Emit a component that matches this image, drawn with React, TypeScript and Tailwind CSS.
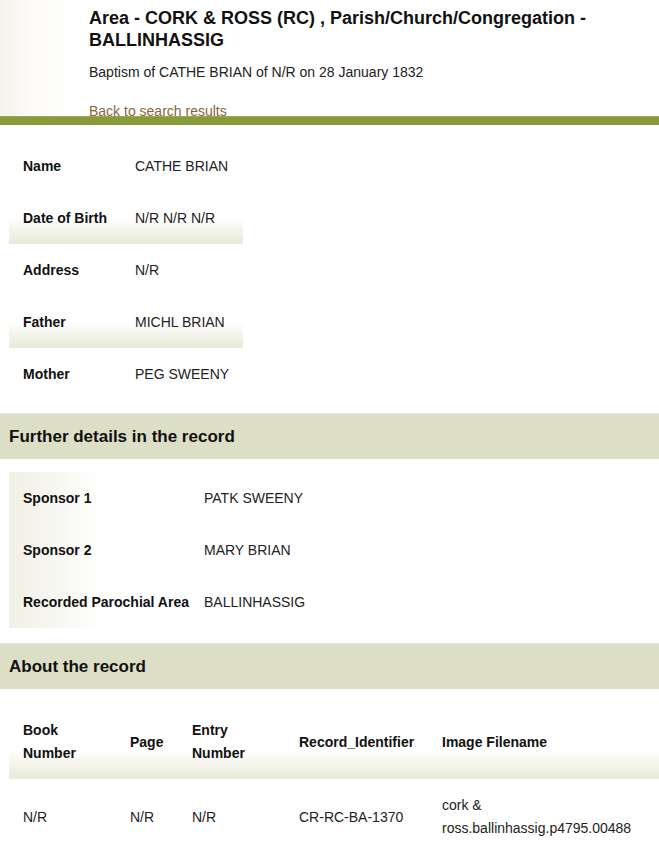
import React from "react";

const people = [
  { label: "Name", value: "CATHE BRIAN", shade: false },
  { label: "Date of Birth", value: "N/R N/R N/R", shade: true },
  { label: "Address", value: "N/R", shade: false },
  { label: "Father", value: "MICHL BRIAN", shade: true },
  { label: "Mother", value: "PEG SWEENY", shade: false },
];

const further = [
  { label: "Sponsor 1", value: "PATK SWEENY" },
  { label: "Sponsor 2", value: "MARY BRIAN" },
  { label: "Recorded Parochial Area", value: "BALLINHASSIG" },
];

const SectionBand = ({ title }: { title: string }) => (
  <div className="h-[46px] bg-[#dcdfc5] border-t border-[#e6e8d6] flex items-center pl-[9px]">
    <h2 className="text-[17px] font-bold text-[#111]">{title}</h2>
  </div>
);

const App = () => {
  return (
    <div className="w-[659px] min-h-[847px] bg-white text-[#222] font-['Liberation_Sans',Arial,sans-serif]">
      {/* header */}
      <div className="flex h-[116px] bg-gradient-to-r from-[#f5f2ec] via-[#fcfbf8] via-[5%] to-white to-[11%]">
        <div className="w-[89px] shrink-0" />
        <div className="pt-[7px]">
          <h1 className="text-[18px] font-bold leading-[22px] text-[#111]">
            Area - CORK &amp; ROSS (RC) , Parish/Church/Congregation - BALLINHASSIG
          </h1>
          <p className="mt-[12px] text-[14px] leading-[18px]">
            Baptism of CATHE BRIAN of N/R on 28 January 1832
          </p>
          <a className="block mt-[21px] text-[14px] leading-[18px] text-[#86673b]">
            Back to search results
          </a>
        </div>
      </div>
      <div className="h-[9px] bg-[#899a3b] border-t border-[#9aa951]" />

      {/* main person table */}
      <div className="mt-[15px] ml-[9px] w-[234px]">
        {people.map((r) => (
          <div
            key={r.label}
            className={`flex items-center h-[52px] text-[14px] ${
              r.shade ? "bg-gradient-to-b from-white from-50% to-[#e9e9d9]" : ""
            }`}
          >
            <div className="w-[126px] shrink-0 pl-[14px] font-bold text-[#111]">{r.label}</div>
            <div>{r.value}</div>
          </div>
        ))}
      </div>

      <div className="mt-[13px]">
        <SectionBand title="Further details in the record" />
      </div>

      <div className="mt-[13px] ml-[9px] w-[320px] bg-gradient-to-r from-[#f0f0e5] to-white to-[30%]">
        {further.map((r) => (
          <div key={r.label} className="flex items-center h-[52px] text-[14px]">
            <div className="w-[195px] shrink-0 pl-[14px] font-bold text-[#111]">{r.label}</div>
            <div>{r.value}</div>
          </div>
        ))}
      </div>

      <div className="mt-[15px]">
        <SectionBand title="About the record" />
      </div>

      <div className="mt-[16px] ml-[9px] text-[14px] leading-[23px]">
        <div className="flex items-center h-[74px] font-bold text-[#111] bg-gradient-to-b from-white from-60% to-[#e9e9d9]">
          <div className="w-[107px] shrink-0 pl-[14px]">Book<br />Number</div>
          <div className="w-[62px] shrink-0 pl-[14px]">Page</div>
          <div className="w-[107px] shrink-0 pl-[14px]">Entry<br />Number</div>
          <div className="w-[143px] shrink-0 pl-[14px]">Record_Identifier</div>
          <div className="flex-1 pl-[14px]">Image Filename</div>
        </div>
        <div className="flex items-center h-[76px]">
          <div className="w-[107px] shrink-0 pl-[14px]">N/R</div>
          <div className="w-[62px] shrink-0 pl-[14px]">N/R</div>
          <div className="w-[107px] shrink-0 pl-[14px]">N/R</div>
          <div className="w-[143px] shrink-0 pl-[14px]">CR-RC-BA-1370</div>
          <div className="flex-1 pl-[14px]">cork &amp;<br />ross.ballinhassig.p4795.00488</div>
        </div>
      </div>
    </div>
  );
};

export default App;
